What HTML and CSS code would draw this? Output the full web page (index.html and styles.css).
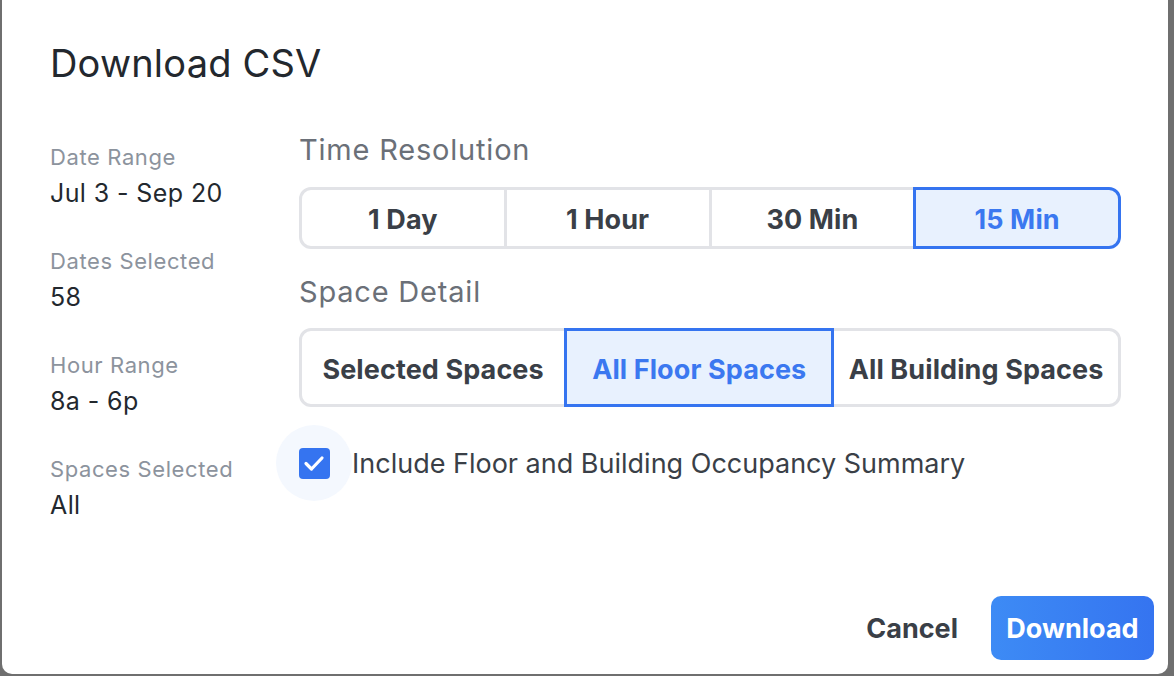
FILE: index.html
```html
<!DOCTYPE html>
<html>
<head>
<meta charset="utf-8">
<link rel="stylesheet" href="styles.css">
</head>
<body>
<div class="page">
  <div class="dialog">
    <h1 class="title">Download CSV</h1>
    <div class="content">
      <div class="summary">
        <div class="stat"><div class="stat-label">Date Range</div><div class="stat-value">Jul 3 - Sep 20</div></div>
        <div class="stat"><div class="stat-label">Dates Selected</div><div class="stat-value">58</div></div>
        <div class="stat"><div class="stat-label">Hour Range</div><div class="stat-value">8a - 6p</div></div>
        <div class="stat"><div class="stat-label">Spaces Selected</div><div class="stat-value">All</div></div>
      </div>
      <div class="options">
        <div class="section-title">Time Resolution</div>
        <div class="segmented time">
          <div class="seg">1 Day</div>
          <div class="seg">1 Hour</div>
          <div class="seg">30 Min</div>
          <div class="seg active">15 Min</div>
        </div>
        <div class="section-title second">Space Detail</div>
        <div class="segmented space">
          <div class="seg s1">Selected Spaces</div>
          <div class="seg s2 active">All Floor Spaces</div>
          <div class="seg s3">All Building Spaces</div>
        </div>
        <div class="check-row">
          <div class="halo">
            <div class="box">
              <svg width="26" height="26" viewBox="0 0 26 26"><path d="M5 13.5 L10.5 19 L21 8" fill="none" stroke="#fff" stroke-width="3.2" stroke-linecap="round" stroke-linejoin="round"/></svg>
            </div>
          </div>
          <div class="check-label">Include Floor and Building Occupancy Summary</div>
        </div>
      </div>
    </div>
    <div class="footer">
      <div class="cancel">Cancel</div>
      <div class="download">Download</div>
    </div>
  </div>
</div>
</body>
</html>
```
FILE: styles.css
```css
html, body {
  margin: 0;
  padding: 0;
}
body {
  background: #6f6f6f;
  height: 676px;
  overflow: hidden;
  font-family: Inter, "Noto Sans", sans-serif;
}
.page {
  display: flex;
  padding-left: 2px;
}
.dialog {
  width: 1166px;
  height: 674px;
  background: #fff;
  border-radius: 0 0 10px 10px;
  display: flex;
  flex-direction: column;
  box-sizing: border-box;
  padding: 0 14px 14px 48px;
}
.title {
  margin: 40px 0 0 0;
  font-size: 38px;
  font-weight: 400;
  line-height: 46px;
  color: #23282e;
  letter-spacing: 0.2px;
}
.content {
  display: flex;
  margin-top: 46px;
}
.summary {
  width: 249px;
  flex-shrink: 0;
  display: flex;
  flex-direction: column;
  gap: 38px;
  padding-top: 11px;
}
.stat-label {
  font-size: 22px;
  line-height: 28px;
  color: #8c939d;
  letter-spacing: 0.6px;
}
.stat-value {
  font-size: 25px;
  line-height: 32px;
  margin-top: 6px;
  color: #23282e;
  letter-spacing: 0.4px;
}
.options {
  width: 822px;
  display: flex;
  flex-direction: column;
}
.section-title {
  font-size: 29px;
  line-height: 36px;
  color: #6b7078;
  letter-spacing: 0.8px;
}
.section-title.second {
  margin-top: 25px;
}
.segmented {
  display: flex;
}
.seg {
  flex: 1 1 0;
  display: flex;
  align-items: center;
  justify-content: center;
  border: 3px solid #e2e3e7;
  margin-left: -3px;
  padding-top: 3px;
  font-size: 27px;
  font-weight: 700;
  color: #3a3f47;
  box-sizing: border-box;
  letter-spacing: 0.1px;
  white-space: nowrap;
}
.seg:first-child {
  margin-left: 0;
  border-radius: 12px 0 0 12px;
}
.seg:last-child {
  border-radius: 0 12px 12px 0;
}
.seg.active {
  border-color: #3574f0;
  background: #e8f1fe;
  color: #3b78f0;
  position: relative;
  z-index: 1;
}
.time .seg {
  height: 62px;
}
.segmented.time {
  margin-top: 19px;
}
.space .seg {
  height: 79px;
}
.space .s1 { flex: 268 1 0; }
.space .s2 { flex: 270 1 0; }
.space .s3 { flex: 290 1 0; }
.segmented.space {
  margin-top: 18px;
}
.check-row {
  display: flex;
  align-items: center;
  margin-top: 18px;
  margin-left: -23px;
}
.halo {
  width: 76px;
  height: 76px;
  border-radius: 50%;
  background: #f4f8fe;
  display: flex;
  align-items: center;
  justify-content: center;
}
.box {
  width: 31px;
  height: 31px;
  border-radius: 4px;
  background: #3574f0;
  display: flex;
  align-items: center;
  justify-content: center;
}
.check-label {
  font-size: 27px;
  color: #3a3f47;
  letter-spacing: 0;
}
.footer {
  margin-top: auto;
  display: flex;
  justify-content: flex-end;
  align-items: center;
}
.cancel {
  font-size: 27px;
  font-weight: 700;
  color: #3a3f47;
  margin-right: 33px;
  letter-spacing: 0;
}
.download {
  width: 163px;
  height: 64px;
  border-radius: 10px;
  background: linear-gradient(90deg, #3d8bf5, #3574f0);
  color: #fff;
  font-size: 27px;
  font-weight: 700;
  display: flex;
  align-items: center;
  justify-content: center;
  letter-spacing: 0;
}
```
